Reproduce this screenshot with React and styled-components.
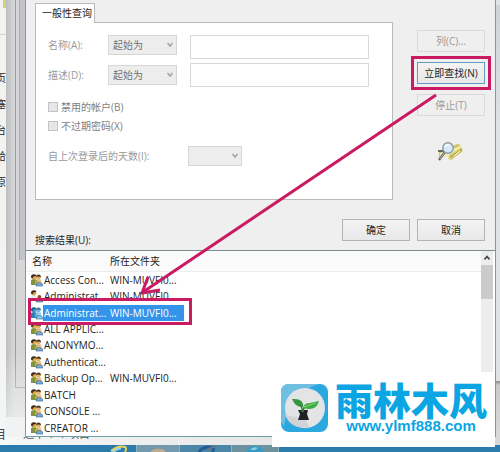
import styled, { createGlobalStyle } from "styled-components";

const GlobalStyle = createGlobalStyle`
    * {
        box-sizing: border-box;
    }
    body {
        margin: 0;
        background: #2b7cab;
        color: #222;
        font-family: "Open Sans", "Noto Sans CJK SC", sans-serif;
        font-size: 10px;
        line-height: 14px;
    }
    button, input, select {
        font: inherit;
        color: inherit;
    }
`;

const Desktop = styled.div`
    position: relative;
    min-height: 100vh;
    overflow: hidden;
    display: flex;
    flex-direction: column;
`;
const Workspace = styled.div`
    display: flex;
    height: 437px;
    background: #f0f2f3;
`;

/* windows that stick out behind the dialog */
const Behind = styled.div`
    width: 25px;
    flex: none;
    display: flex;
`;
const Explorer = styled.div`
    width: 6px;
    flex: none;
    display: flex;
    flex-direction: column;
    align-items: flex-end;
    gap: 12px;
    overflow: hidden;
    background: linear-gradient(#f2f2ef, #f4f5f5);
    line-height: 14px;
`;
const ExplorerMark = styled.div`
    width: 3px;
    height: 8px;
    background: #d8cf79;
`;
const ExplorerLine = styled.div`
    width: 6px;
    height: 1px;
    margin: 14px 0 24px;
    background: #d5d5d5;
`;
const OuterWindow = styled.div`
    flex: 1;
    height: 417px;
    display: flex;
    padding-left: 9px;
    background: linear-gradient(90deg, #bdbec0, #d6d7d8 8px);
    -webkit-mask-image: linear-gradient(#000 85%, rgba(0, 0, 0, 0.35));
    mask-image: linear-gradient(#000 85%, rgba(0, 0, 0, 0.35));
`;
const InnerWindow = styled.div`
    flex: 1;
    height: 388px;
    display: flex;
    padding-left: 3px;
    border: solid #9b9da0;
    border-width: 0 0 1px 1px;
    background: #d5d6d8;
`;
const BackWindow = styled.div`
    flex: 1;
    height: 260px;
    border-left: 1px solid #aaabad;
    background: #c3c4c8;
`;
const RightEdge = styled.div`
    width: 4px;
    flex: none;
    border-top: 5px solid #dfe4e6;
    background: linear-gradient(#cdd4d8, #dfe1e3 27%, #dfe1e3 87%, #888 87%, #c9c9c9 88%, #dadada);
`;

const Dialog = styled.main`
    flex: 1;
    min-width: 0;
    display: flex;
    flex-direction: column;
    border: 1px solid #6f9eb0;
    border-top: 0;
    background: #efefef;
`;
const Query = styled.form`
    display: flex;
    gap: 24px;
    padding: 0 10px 0 9px;
`;
const Tabs = styled.div`
    flex: 1;
    min-width: 0;
    padding-top: 3px;
`;
const Tab = styled.h1`
    position: relative;
    width: 60px;
    height: 20px;
    margin: 0 0 -1px;
    padding-left: 6px;
    border: 1px solid #b9b9b9;
    border-bottom: 0;
    background: #fff;
    font-size: 10px;
    font-weight: 400;
    line-height: 18px;
    white-space: nowrap;
`;
const Panel = styled.section`
    height: 178px;
    padding: 12px 23px 0 12px;
    border: 1px solid #b9b9b9;
    background: #fff;
    color: #808080;
`;
const Field = styled.div`
    display: flex;
    align-items: ${props => props.$align || "center"};
    margin-bottom: 4px;
`;
const FieldLabel = styled.label`
    width: ${props => props.$wide ? "140px" : "60px"};
    flex: none;
    color: #9a9a9a;
    line-height: 20px;
`;
const SelectBox = styled.div`
    position: relative;
    width: ${props => props.$width};
    flex: none;
    color: #707070;

    svg {
        position: absolute;
        top: 7px;
        right: 3px;
        pointer-events: none;
    }
`;
const Select = styled.select`
    display: block;
    appearance: none;
    width: 100%;
    height: 20px;
    padding: 0 4px;
    border: 1px solid #d6d6d6;
    border-radius: 0;
    background: #ededed;
    opacity: 1;
`;
const TextInput = styled.input`
    flex: 1;
    min-width: 0;
    height: 24px;
    margin-left: 13px;
    border: 1px solid #d9d9d9;
    background: #fff;
`;
const Checks = styled.div`
    display: flex;
    flex-direction: column;
    gap: 5px;
    margin: 13px 0;
`;
const CheckLabel = styled.label`
    display: flex;
    align-items: center;
    gap: 3px;
    height: 14px;
`;
const CheckBox = styled.input`
    appearance: none;
    width: 10px;
    height: 10px;
    margin: 0;
    border: 1px solid #c4c4c4;
    background: #e6e6e6;
`;
const Actions = styled.div`
    width: 68px;
    flex: none;
    display: flex;
    flex-direction: column;
    gap: 10px;
    padding-top: 30px;
`;
const Button = styled.button`
    width: 68px;
    height: 22px;
    padding: 0;
    border: 1px solid ${props => props.$main ? "#5d9cc4" : "#b4b4b4"};
    background: linear-gradient(#f3f3f3, #e8e8e8);
    color: #222;
    white-space: nowrap;

    &:disabled {
        border-color: #d9d9d9;
        background: #efefef;
        color: #9a9a9a;
    }
`;
const MarkedButton = styled(Button)`
    outline: 3px solid #c91a62;
    outline-offset: 3px;
`;
const SearchArt = styled.svg`
    margin: 15px 0 0 20px;
`;
const Confirm = styled.div`
    display: flex;
    gap: 7px;
    height: 28px;
    margin-top: 19px;
    padding: 0 10px 0 9px;
`;
const ResultTitle = styled.h2`
    flex: 1;
    align-self: flex-end;
    margin: 0;
    font-size: 10px;
    font-weight: 400;
`;

const ResultBox = styled.div`
    display: flex;
    margin-top: 3px;
    border-top: 1px solid #7d8c93;
    background: #fff;
`;
const Table = styled.table`
    flex: 1;
    width: 100%;
    height: 185px;
    table-layout: fixed;
    border-collapse: collapse;
    white-space: nowrap;

    th, td {
        padding: 0;
        text-align: left;
        font-weight: 400;
    }
    th {
        height: 20px;
        background: #fbfbfb;
        border-bottom: 1px solid #ededed;
    }
    th:first-child {
        padding-left: 6px;
    }
    th:nth-child(1) {
        width: 84px;
    }
    th:nth-child(2) {
        width: 74px;
    }
`;
const NameCell = styled.div`
    display: flex;
    align-items: center;
    padding-left: 4px;
`;
const CellText = styled.span`
    display: block;
    flex: 1;
    height: 16px;
    padding-left: ${props => props.$name ? "1px" : "0"};
    background: ${props => props.$selected ? "#3394ea" : "transparent"};
    color: ${props => props.$selected ? "#fff" : "#222"};
    line-height: 16px;
`;
const ScrollBar = styled.div`
    width: 14px;
    flex: none;
    border-right: 2px solid #fff;
    background: #ededed;
`;
const ScrollArrow = styled.svg`
    display: block;
    margin: 4px 3px;
`;
const ScrollThumb = styled.div`
    height: 34px;
    background: #cbcbcb;
`;

const StatusBar = styled.div`
    height: 8px;
    background: linear-gradient(90deg, #f6f7f7, #d8d8d8);
`;
const StatusText = styled.div`
    position: absolute;
    left: -6px;
    top: 427px;
    color: #445;
    font-size: 12px;
    line-height: 16px;
`;
const StatusClip = styled.div`
    position: absolute;
    left: 23px;
    top: 437px;
    height: 4px;
    display: flex;
    align-items: flex-end;
    overflow: hidden;
    color: #556;
    font-size: 11px;
`;
const TaskBar = styled.footer`
    flex: 1;
    min-height: 7px;
    display: flex;
    padding-left: 102px;
    overflow: hidden;
    background: #2b7cab;
`;
const Task = styled.div`
    width: ${props => props.$width};
    border-right: 1px solid #8fb0be;
    background: ${props => props.$color};

    svg {
        display: block;
        margin: 0 auto;
    }
`;

const Arrow = styled.svg`
    position: absolute;
    top: 0;
    left: 0;
    pointer-events: none;
`;

const Brand = styled.aside`
    position: absolute;
    top: 372px;
    right: 5px;
    width: 223px;
    height: 75px;
    display: flex;
    gap: 7px;
    padding: 8px 0 0 9px;
    background: #fff;
    color: #0ba5e3;
    font-weight: 700;
    white-space: nowrap;
`;
const BrandLogo = styled.svg`
    margin-top: 4px;
`;
const BrandText = styled.div`
    display: flex;
    flex-direction: column;
    align-items: center;
`;
const BrandName = styled.div`
    font-family: "Noto Sans CJK SC", sans-serif;
    font-size: 38px;
    font-weight: 900;
    line-height: 38px;
`;
const BrandUrl = styled.div`
    font-family: "Liberation Sans Narrow", "Liberation Sans", sans-serif;
    font-size: 15px;
    line-height: 16px;
`;

const Chevron = () => (
    <svg width="8" height="6" viewBox="0 0 8 6" fill="none" stroke="#a5a5a5" strokeWidth="1.5">
        <path d="M1.500 1 4 4 6.500 1" />
    </svg>
);

const GroupIcon = ({ single, selected }) => (
    <svg width="13" height="14" viewBox="0 0 13 14">
        <path d="M1 12V8q0-2 3-2t3 2v4z" fill={single ? "#eee" : selected ? "#2f7fae" : "#7f9440"} />
        <circle cx="3.7" cy="4.2" r="2.4" fill={selected ? "#4a94c4" : "#d9a548"} />
        <path d="M1 4.500Q1 1 4 1.200q2.600 0 2.400 2-3-.6-4 2z" fill={selected ? "#225f8d" : "#3f2c1b"} />
        {!single && <path d="M5 9q0-2.600 3-2.600T11 9v2H5z" fill={selected ? "#67b4df" : "#c4a845"} />}
        {!single && <circle cx="8.200" cy="4.300" r="2.300" fill={selected ? "#78b6dc" : "#e0b25c"} />}
        {!single && <path d="M6 4Q6 1.300 8.400 1.400q2.800.2 2.400 3-2-1.700-4.800-.4z" fill={selected ? "#2f719e" : "#4c341c"} />}
        <circle cx="9.400" cy="7.900" r="1.900" fill={selected ? "#a0d0ee" : single ? "#8c4a2c" : "#e2c08f"} />
        <path d="M6 13q0-3.600 3.400-3.600t3.500 3.600z" fill={selected ? "#87c6f2" : "#7ba9d1"} stroke="#37648f" strokeWidth=".6" />
    </svg>
);

const results = [
    { name: "Access Con...", folder: "WIN-MUVFI0..." },
    { name: "Administrat...", folder: "WIN-MUVFI0...", single: true },
    { name: "Administrat...", folder: "WIN-MUVFI0...", selected: true },
    { name: "ALL APPLIC..." },
    { name: "ANONYMO..." },
    { name: "Authenticat..." },
    { name: "Backup Op...", folder: "WIN-MUVFI0..." },
    { name: "BATCH" },
    { name: "CONSOLE ..." },
    { name: "CREATOR ..." },
];

const App = () => {
    return (
        <>
            <GlobalStyle />
            <Desktop>
                <Workspace>
                    <Behind>
                        <Explorer>
                            <ExplorerMark />
                            <ExplorerLine />
                            <span>页</span>
                            <span>塞</span>
                            <span>台</span>
                            <span>给</span>
                            <span>原</span>
                        </Explorer>
                        <OuterWindow>
                            <InnerWindow>
                                <BackWindow />
                            </InnerWindow>
                        </OuterWindow>
                    </Behind>
                    <Dialog>
                        <Query onSubmit={e => e.preventDefault()}>
                            <Tabs>
                                <Tab>一般性查询</Tab>
                                <Panel>
                                    <Field $align="flex-start">
                                        <FieldLabel htmlFor="name">名称(A):</FieldLabel>
                                        <SelectBox $width="69px">
                                            <Select disabled aria-label="名称"><option>起始为</option></Select>
                                            <Chevron />
                                        </SelectBox>
                                        <TextInput id="name" disabled />
                                    </Field>
                                    <Field>
                                        <FieldLabel htmlFor="desc">描述(D):</FieldLabel>
                                        <SelectBox $width="69px">
                                            <Select disabled aria-label="描述"><option>起始为</option></Select>
                                            <Chevron />
                                        </SelectBox>
                                        <TextInput id="desc" disabled />
                                    </Field>
                                    <Checks>
                                        <CheckLabel><CheckBox type="checkbox" disabled />禁用的帐户(B)</CheckLabel>
                                        <CheckLabel><CheckBox type="checkbox" disabled />不过期密码(X)</CheckLabel>
                                    </Checks>
                                    <Field>
                                        <FieldLabel $wide htmlFor="days">自上次登录后的天数(I):</FieldLabel>
                                        <SelectBox $width="54px">
                                            <Select id="days" disabled />
                                            <Chevron />
                                        </SelectBox>
                                    </Field>
                                </Panel>
                            </Tabs>
                            <Actions>
                                <Button type="button" disabled>列(C)...</Button>
                                <MarkedButton $main>立即查找(N)</MarkedButton>
                                <Button type="button" disabled>停止(T)</Button>
                                <SearchArt width="27" height="21" viewBox="0 0 27 21">
                                    <path d="M2 10 20 3l4 1-10 10-12 2z" fill="#cdc66e" />
                                    <path d="M3 12 14 9l9-4 1 1-9 8-12 3z" fill="#f3edb0" />
                                    <path d="M12 14 24 6l2 4-12 9-3-1z" fill="#ddd47a" />
                                    <path d="m13 16 12-8" stroke="#8f8735" />
                                    <path d="m14 18 11-8" stroke="#b8ae50" />
                                    <path d="m17 15 6-5" stroke="#f5efb6" strokeWidth="1.4" />
                                    <path d="M1 10h6l3-1" stroke="#444" strokeWidth="1.5" fill="none" />
                                    <path d="M8 11 2 19" stroke="#626262" strokeWidth="2.4" />
                                    <path d="m8 11-5 7" stroke="#bbb" />
                                    <circle cx="11" cy="7" r="5.2" fill="#d5eafa" stroke="#899ca9" strokeWidth="1.4" />
                                    <path d="M8 6q1-3 4-2" stroke="#fff" strokeWidth="1.4" fill="none" />
                                </SearchArt>
                            </Actions>
                        </Query>
                        <Confirm>
                            <ResultTitle>搜索结果(U):</ResultTitle>
                            <Button>确定</Button>
                            <Button>取消</Button>
                        </Confirm>
                        <ResultBox>
                            <Table>
                                <thead>
                                    <tr>
                                        <th>名称</th>
                                        <th>所在文件夹</th>
                                        <th />
                                    </tr>
                                </thead>
                                <tbody>
                                    {results.map((row, i) => (
                                        <tr key={i}>
                                            <td>
                                                <NameCell>
                                                    <GroupIcon single={row.single} selected={row.selected} />
                                                    <CellText $name $selected={row.selected}>{row.name}</CellText>
                                                </NameCell>
                                            </td>
                                            <td><CellText $selected={row.selected}>{row.folder}</CellText></td>
                                            <td />
                                        </tr>
                                    ))}
                                </tbody>
                            </Table>
                            <ScrollBar>
                                <ScrollArrow width="6" height="6" viewBox="0 0 6 6" fill="none" stroke="#444" strokeWidth="1.6">
                                    <path d="M.5 4.500 3 1.500l2.500 3" />
                                </ScrollArrow>
                                <ScrollThumb />
                            </ScrollBar>
                        </ResultBox>
                    </Dialog>
                    <RightEdge />
                </Workspace>
                <StatusBar />
                <StatusText>目</StatusText>
                <StatusClip>选中 1 个项目</StatusClip>
                <TaskBar>
                    <Task $width="35px" $color="#2b7cab">
                        <svg width="18" height="7" viewBox="0 0 18 7" fill="none">
                            <path d="M3 8q2-5 8-5" stroke="#8fd2f2" strokeWidth="3" />
                            <path d="M1 6Q8 0 15 2q2 1 0 5" stroke="#ead35b" strokeWidth="2" />
                        </svg>
                    </Task>
                    <Task $width="43px" $color="#7299ad">
                        <svg width="18" height="7" viewBox="0 0 18 7"><path d="M2 6q5-4 14-1v2H2z" fill="#c1aa8c" /></svg>
                    </Task>
                    <Task $width="52px" $color="#4a86a8">
                        <svg width="22" height="7" viewBox="0 0 22 7" fill="none">
                            <path d="M4 7q3-5 10-5t3 5" stroke="#245c96" strokeWidth="3" />
                            <path d="m12 5 8-4" stroke="#617684" strokeWidth="2" />
                        </svg>
                    </Task>
                    <Task $width="47px" $color="#6c929f">
                        <svg width="20" height="7" viewBox="0 0 20 7"><path d="M1 7q2-6 9-6t9 6z" fill="#379bc5" /><path d="M5 5q3-4 8-2l-3 2z" fill="#8bd0da" /></svg>
                    </Task>
                </TaskBar>

                <Arrow width="500" height="452" viewBox="0 0 500 452" fill="none" stroke="#c91a62" strokeWidth="3">
                    <path d="M436 95 143 292" />
                    <path d="M148 277 142 293l18-3" strokeLinejoin="round" />
                    <path d="M29.500 299.500H190.500V323.500H29.500Z" />
                </Arrow>

                <Brand>
                    <BrandLogo width="47" height="48" viewBox="0 0 47 48">
                        <rect width="47" height="48" rx="8" fill="#2ba9df" />
                        <path d="M0 38V8q0-8 8-8h30Q8 8 3 42z" fill="#70bfe3" />
                        <circle cx="24" cy="24" r="20" fill="#e3e4e5" />
                        <path d="M4 30q9 4 20 4l4 9Q9 46 4 30z" fill="#d2d3d4" />
                        <path d="M17 26h10l-1 4 2 6H17l2-6z" fill="#202326" />
                        <path d="M21 28q1-5-3-8M22 28q0-5 4-6" stroke="#387b34" strokeWidth="1.5" fill="none" />
                        <path d="M11 15q12-1 11 8-7 1-11-8z" fill="#369443" />
                        <path d="M22 24q1-5 7-5l9-2q-3 11-16 7z" fill="#3cac45" />
                        <path d="m23 23 12-4" stroke="#8bd26e" fill="none" />
                    </BrandLogo>
                    <BrandText>
                        <BrandName>雨林木风</BrandName>
                        <BrandUrl>www.ylmf888.com</BrandUrl>
                    </BrandText>
                </Brand>
            </Desktop>
        </>
    );
};

export default App;
